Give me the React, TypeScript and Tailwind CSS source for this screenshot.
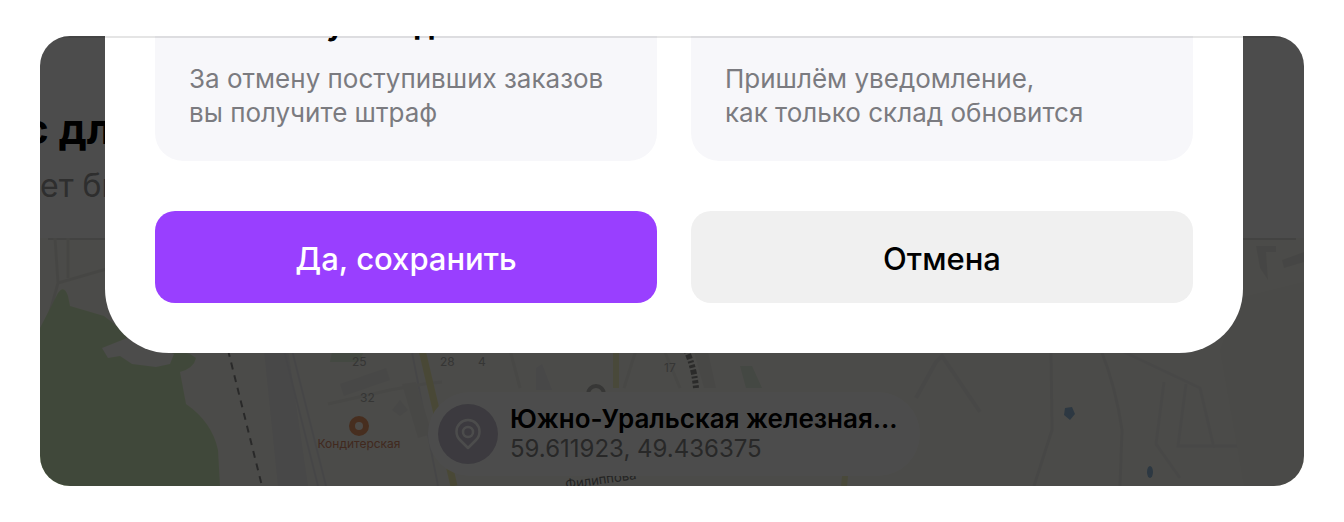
import { useId } from "react";

const NOTES = [
  { title: "Заказы нужно доставить", lines: ["За отмену поступивших заказов", "вы получите штраф"] },
  { title: "Смена займёт несколько", lines: ["Пришлём уведомление,", "как только склад обновится"] },
];

function PinIcon() {
  return (
    <svg className="size-8" viewBox="0 0 32 32" fill="none" stroke="#ffffff" strokeWidth="2.5" strokeLinejoin="round">
      <path d="M16 30L8 22C5.500 19.500 4.500 17 4.500 13.500a11.500 11.500 0 0 1 23 0C27.500 17 26.500 19.500 24 22Z" />
      <circle cx="16" cy="14" r="5" />
    </svg>
  );
}

function MapCanvas() {
  return (
    <svg className="absolute inset-0 size-full" viewBox="0 0 1264 248" preserveAspectRatio="xMidYMid slice" aria-hidden="true">
      <rect width="1264" height="248" fill="#fbfbf3" />
      <path d="M8 1H1256" stroke="#e2e2dc" strokeWidth="2" />
      <path d="M15 0L18 45L0 110M18 45L70 30M28 0V40" fill="none" stroke="#ecece4" strokeWidth="3" />
      <path d="M0 90L18 55Q24 46 28 58L30 68L64 78L92 100L150 116L156 120Q154 130 140 134L146 166Q172 184 178 212L180 248H0Z" fill="#d8f2c2" />
      <path d="M62 110L92 98L134 116L130 126L116 129L92 126L80 118L68 120Z" fill="#fdfdfb" />

      {/* railway */}
      <path d="M188 112L222 248" stroke="#8a8a8a" strokeWidth="2" strokeDasharray="7 6" />
      <path d="M224 112L238 248H268L248 112Z" fill="#f0f0f1" />
      <path d="M252 112L286 248M244 112L278 248M372 114L398 248" fill="none" stroke="#ececee" strokeWidth="2" />

      {/* blocks and streets */}
      <path d="M292 114H324L318 124H290Z" fill="#e4f5dc" />
      <path d="M300 146L346 130L350 142L304 158ZM360 162L368 172L360 178L352 172Z" fill="#f1f1ee" />
      <path d="M362 146L378 200L392 196L376 144ZM654 114L664 150H676L668 114Z" fill="#f1f0ec" />
      <path d="M288 166L350 152L384 146L402 144M470 112L480 150M596 112L584 150M624 112L640 150" fill="none" stroke="#f0f0ea" strokeWidth="3" />
      <path d="M382 112L414 248" stroke="#f5f2b4" strokeWidth="7" />
      <path d="M576 112V150M804 248L806 230" stroke="#f4f4c4" strokeWidth="6" />
      <path d="M496 130L502 126L512 152H496Z" fill="#f0f0f2" />
      <path d="M700 128H712L722 150H706Z" fill="#e4f0e0" />
      <path d="M876 160L896 124L902 118L940 174" fill="none" stroke="#f1f1ee" strokeWidth="4" />
      <circle cx="556" cy="156" r="8" fill="none" stroke="#b7b7b5" strokeWidth="4" />
      <path d="M646 112Q654 128 656 150" fill="none" stroke="#8f8f8d" strokeWidth="6" strokeDasharray="3 2 5 2 2 2" />
      <path d="M1011 112L1012 192L994 248M1061 112Q1076 150 1082 192L1080 248" fill="none" stroke="#eeeeea" strokeWidth="3" />
      <path d="M1084 114L1160 150L1174 210M1124 144L1116 206L1140 240M1146 146L1138 208H1200" fill="none" stroke="#f1f1ef" strokeWidth="3" />
      <path d="M1180 112L1200 60L1264 44V248H1204Z" fill="#f7f7f0" />
      <path d="M1216 8H1236V14H1226L1228 42L1220 30ZM1242 22L1264 14V24L1244 30Z" fill="#ecece6" />
      <path d="M1025 170L1032 169L1035 176L1030 182L1024 177Z" fill="#96bcdc" />
      <ellipse cx="1110" cy="234" rx="3" ry="6" fill="#96bcdc" />

      {/* labels */}
      <g className="font-['Inter',sans-serif]" fill="#b4b4b2" fontSize="12">
        <text x="312" y="128">25</text>
        <text x="400" y="128">28</text>
        <text x="438" y="128">4</text>
        <text x="320" y="164">32</text>
        <text x="624" y="134">17</text>
      </g>
      <circle cx="319" cy="188" r="7" fill="#fff7ef" stroke="#ee9a68" strokeWidth="6" />
      <text x="319" y="210" textAnchor="middle" fontSize="12" className="font-['Inter',sans-serif]" fill="#d98a68">
        Кондитерская
      </text>
      <text x="526" y="251" fontSize="13" transform="rotate(-8 526 251)" className="font-['Inter',sans-serif]" fill="#777">
        Филиппова
      </text>
    </svg>
  );
}

function Background() {
  return (
    <div>
      <div className="h-[202px] pt-16">
        <h2 className="-ml-4 text-[42px] leading-[58px] font-bold whitespace-nowrap text-black">с для</h2>
        <p className="mt-1.5 text-[32px] leading-[44px] whitespace-nowrap text-[#999]">ет быть</p>
      </div>
      <div className="relative flex h-[248px] items-end justify-center pb-2.5">
        <MapCanvas />
        <div className="relative ml-1 flex w-[492px] items-center gap-3 rounded-full bg-white py-3 pr-4 pl-2.5">
          <span className="flex size-[60px] shrink-0 items-center justify-center rounded-full bg-[#c8c4d2]">
            <PinIcon />
          </span>
          <div>
            <p className="text-[26px] leading-[30px] font-semibold whitespace-nowrap text-black">Южно-Уральская железная...</p>
            <p className="text-[24px] leading-[30px] text-[#888]">59.611923, 49.436375</p>
          </div>
        </div>
      </div>
    </div>
  );
}

export default function App() {
  const titleId = useId();

  return (
    <main className="bg-white px-10 py-9 font-['Inter','Liberation_Sans',sans-serif]">
      <section className="relative overflow-hidden rounded-[30px]">
        <Background />
        <div className="absolute inset-0 bg-black/70" />

        <div
          role="dialog"
          aria-labelledby={titleId}
          className="absolute right-[61px] bottom-[133px] left-[65px] rounded-b-[64px] bg-white px-[50px] pb-[50px]"
        >
          <div className="grid grid-cols-2 gap-x-[34px] gap-y-[50px]">
            {NOTES.map((note, i) => (
              <div key={note.title} className="rounded-[28px] bg-[#f7f7fa] px-[34px] pt-8 pb-[31px]">
                <h3 id={i === 0 ? titleId : undefined} className="mb-[22px] text-[30px] leading-8 font-bold whitespace-nowrap text-black">
                  {note.title}
                </h3>
                <p className="text-[26px] leading-[34px] whitespace-nowrap text-[#7b7b80]">
                  {note.lines[0]}
                  <br />
                  {note.lines[1]}
                </p>
              </div>
            ))}
            <button type="button" className="h-[92px] rounded-[20px] bg-[#993fff] pt-1 text-[31px] font-medium text-white">
              Да, сохранить
            </button>
            <button type="button" className="h-[92px] rounded-[20px] bg-[#f0f0f0] pt-1 text-[31px] font-medium text-black">
              Отмена
            </button>
          </div>
        </div>

        <div className="absolute inset-x-0 top-0 h-0.5 bg-black/10" />
      </section>
    </main>
  );
}
